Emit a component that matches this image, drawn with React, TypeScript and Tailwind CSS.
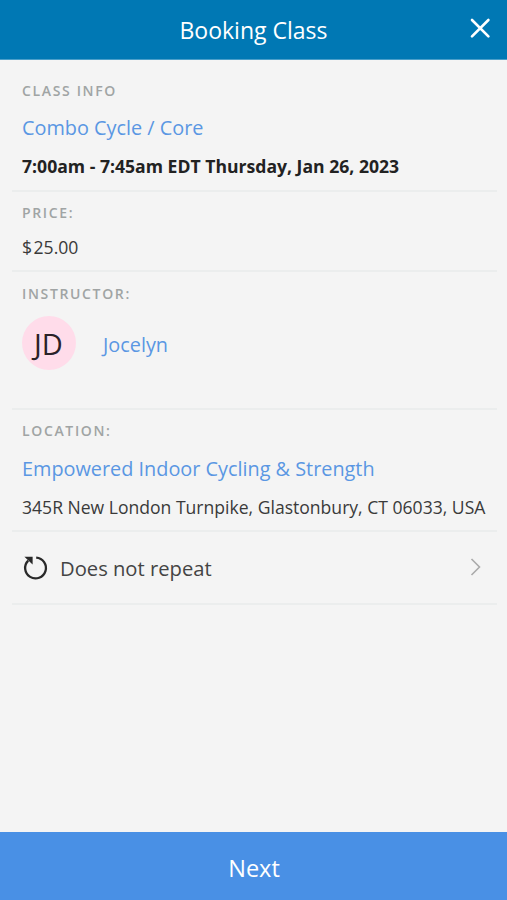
import type { ReactNode } from "react";

function Label({ children }: { children: ReactNode }) {
  return (
    <h2 className="text-[14px] leading-[20px] font-semibold tracking-[1.65px] text-[#a0a4a4]">
      {children}
    </h2>
  );
}

function Section({ className, children }: { className: string; children: ReactNode }) {
  return (
    <section className={`mr-2.5 ml-3 border-b-2 border-[#ebeded] px-2.5 whitespace-nowrap ${className}`}>
      {children}
    </section>
  );
}

export default function App() {
  return (
    <div className="flex h-[900px] w-[507px] flex-col overflow-hidden bg-[#f4f4f4] font-['Open_Sans','Noto_Sans',sans-serif] text-[#3a3a3a]">
      <header className="grid h-[60px] shrink-0 grid-cols-[1fr_auto_1fr] items-center border-b border-[#4a9fca] bg-[#0078b4] text-white">
        <span />
        <h1 className="text-[23px] leading-[32px]">Booking Class</h1>
        <button aria-label="Close" className="mr-[16px] mb-[3px] justify-self-end">
          <svg width="22" height="22" viewBox="0 0 22 22" fill="none" stroke="currentColor" strokeWidth="2.6" strokeLinecap="round">
            <path d="M3 3l16.4 16.4M19.4 3L3 19.4" />
          </svg>
        </button>
      </header>

      <main className="flex-1">
        <Section className="h-[132px] pt-[21px]">
          <Label>CLASS INFO</Label>
          <p className="mt-[13px] text-[19.85px] leading-[28px] text-[#5a97e3]">Combo Cycle / Core</p>
          <p className="mt-[12px] text-[17.6px] leading-[24px] font-bold text-[#222]">
            7:00am - 7:45am EDT Thursday, Jan 26, 2023
          </p>
        </Section>
        <Section className="h-[80px] pt-[11px]">
          <Label>PRICE:</Label>
          <p className="mt-[12px] text-[17.6px] leading-[24px]">
            <span className="mr-[1.5px]">$</span>25.00
          </p>
        </Section>
        <Section className="h-[138px] pt-[12px]">
          <Label>INSTRUCTOR:</Label>
          <div className="mt-[12px] flex items-center">
            <span className="flex size-[54px] items-center justify-center rounded-full bg-[#ffdcea] pt-[2px] pr-px text-[29px] leading-[52px] text-[#2a2228]">
              JD
            </span>
            <span className="mt-[4px] ml-[27px] text-[19.85px] leading-[28px] text-[#5a97e3]">Jocelyn</span>
          </div>
        </Section>
        <Section className="h-[122px] pt-[11px]">
          <Label>LOCATION:</Label>
          <p className="mt-[14px] text-[19.85px] leading-[28px] text-[#5a97e3]">Empowered Indoor Cycling &amp; Strength</p>
          <p className="mt-[12px] text-[17.57px] leading-[24px]">345R New London Turnpike, Glastonbury, CT 06033, USA</p>
        </Section>
        <Section className="flex h-[73px] items-center">
          <svg className="ml-px" width="26" height="26" viewBox="0 0 26 26" fill="none">
            <path d="M13.2 2.6A10.4 10.4 0 1 1 5.2 5.6" stroke="#292929" strokeWidth="2.3" />
            <path d="M1.4 1.8h8.2v7.6z" fill="#292929" />
          </svg>
          <span className="ml-[11px] text-[20.2px] leading-[28px] text-[#444]">Does not repeat</span>
          <svg className="mr-[5px] mb-[2px] ml-auto" width="12" height="18" viewBox="0 0 12 18" fill="none" stroke="#aaa" strokeWidth="1.6">
            <path d="M1.5 1l8 8-8 8" />
          </svg>
        </Section>
      </main>

      <button className="flex h-[68px] shrink-0 items-center justify-center bg-[#4990e5] pt-[4px] pl-px text-[23.5px] leading-[32px] text-white">
        Next
      </button>
    </div>
  );
}
